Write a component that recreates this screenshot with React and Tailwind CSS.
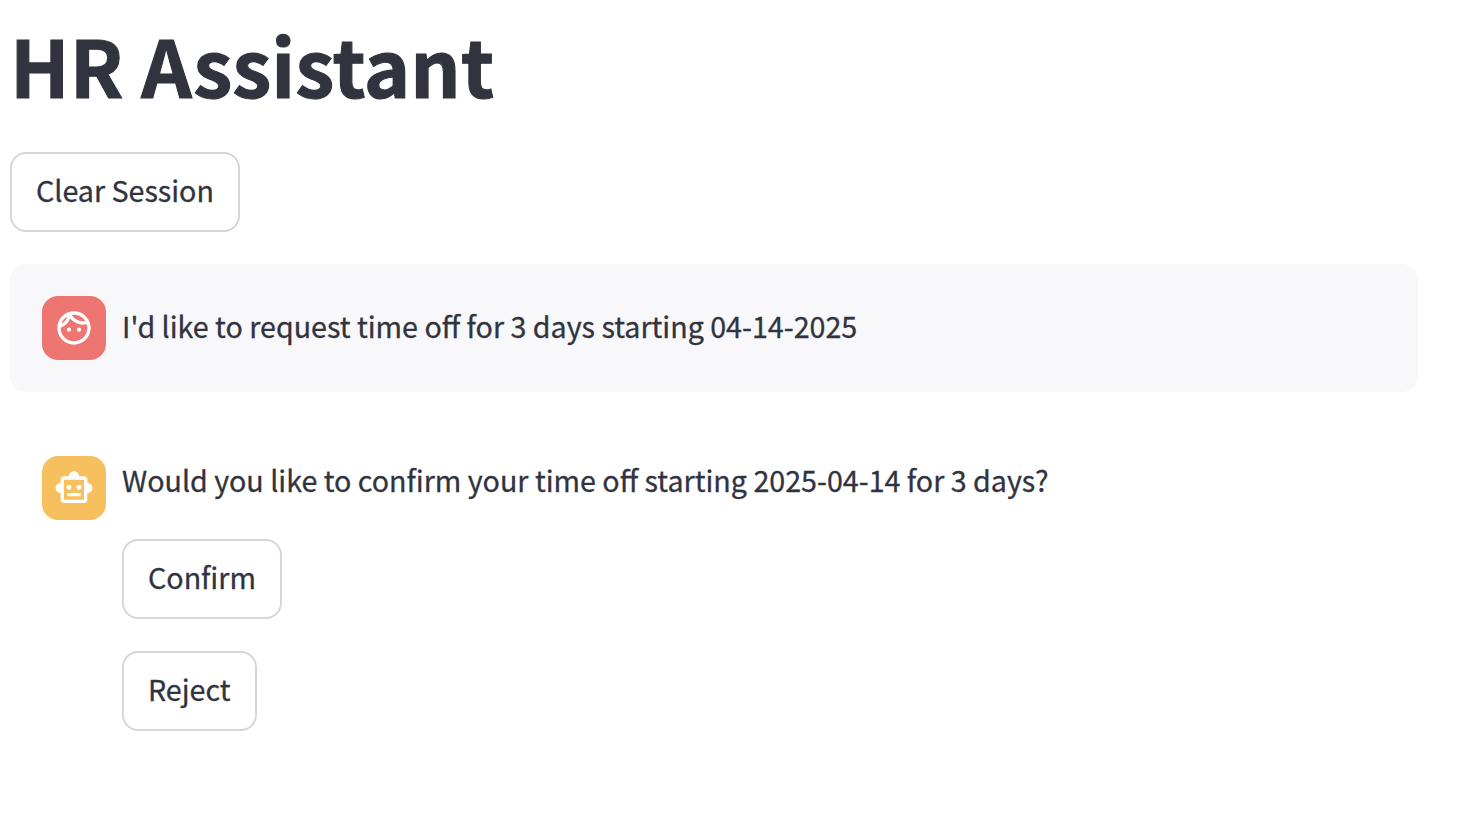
import { MdOutlineFace, MdOutlineSmartToy } from "react-icons/md";

function Button({ children, className }) {
  return (
    <button
      className={`flex h-[80px] items-center whitespace-nowrap rounded-[16px] border-2 border-[#d6d6d9] bg-white pb-[5px] pl-[24px] text-[28.65px] leading-[48px] [-webkit-text-stroke:0.3px_#31333f] ${className}`}
    >
      {children}
    </button>
  );
}

function Avatar({ children, className }) {
  return (
    <div className={`flex size-16 shrink-0 items-center justify-center rounded-[16px] text-white ${className}`}>
      {children}
    </div>
  );
}

export default function App() {
  return (
    <main className="h-[816px] overflow-hidden bg-white pl-[10px] pr-[56px] pt-[16px] font-['Noto_Sans_CJK_JP',sans-serif] text-[#31333f]">
      <h1 className="h-[104px] whitespace-nowrap text-[78.8px] font-bold leading-[97px] [-webkit-text-stroke:1.1px_#31333f]">HR Assistant</h1>
      <Button className="mt-[32px] w-[230px]">Clear Session</Button>
      <section className="mt-[32px] flex h-[128px] gap-4 rounded-[16px] bg-[#f8f8fa] p-8">
        <Avatar className="bg-[#ed7672]">
          <MdOutlineFace size={40} />
        </Avatar>
        <p className="whitespace-nowrap text-[28.65px] leading-[59px] [-webkit-text-stroke:0.3px_#31333f]">I'd like to request time off for 3 days starting 04-14-2025</p>
      </section>
      <section className="mt-[32px] flex gap-4 p-8">
        <Avatar className="bg-[#f5c05d]">
          <MdOutlineSmartToy size={40} />
        </Avatar>
        <div>
          <p className="h-[51px] whitespace-nowrap text-[28.65px] leading-[47px] [-webkit-text-stroke:0.3px_#31333f]">Would you like to confirm your time off starting 2025-04-14 for 3 days?</p>
          <Button className="mt-[32px] w-[160px]">Confirm</Button>
          <Button className="mt-[32px] w-[135px]">Reject</Button>
        </div>
      </section>
    </main>
  );
}
